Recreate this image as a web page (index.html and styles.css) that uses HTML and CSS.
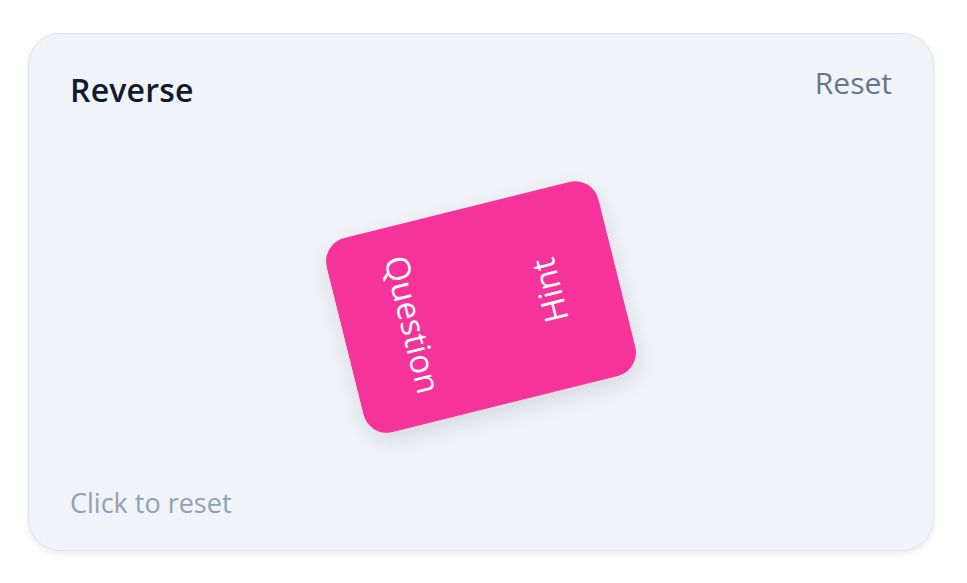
FILE: index.html
```html
<!DOCTYPE html>
<html lang="en">
<head>
<meta charset="utf-8">
<title>Reverse</title>
<link rel="stylesheet" href="styles.css">
</head>
<body>
<main class="panel">
  <header class="panel-head">
    <h1 class="panel-title">Reverse</h1>
    <button class="reset-btn" type="button">Reset</button>
  </header>
  <section class="stage">
    <div class="flashcard">
      <span class="face-label face-question">Question</span>
      <span class="face-label face-hint">Hint</span>
    </div>
  </section>
  <footer class="panel-foot">Click to reset</footer>
</main>
</body>
</html>
```

FILE: styles.css
```css
html, body {
  margin: 0;
  background: #ffffff;
}

body {
  padding: 33px 33px 32px 28px;
  box-sizing: border-box;
  height: 583px;
  font-family: "Open Sans", "Noto Sans", sans-serif;
}

.panel {
  box-sizing: border-box;
  height: 100%;
  display: flex;
  flex-direction: column;
  background: #f0f4f9;
  border: 1px solid #dfe5ee;
  border-radius: 32px;
  box-shadow: 0 3px 6px rgba(15, 23, 42, 0.08);
  padding: 36px 41px 30px 41px;
}

.panel-head {
  display: flex;
  justify-content: space-between;
  align-items: flex-start;
}

.panel-title {
  margin: 0;
  font-size: 32px;
  font-weight: 600;
  color: #111a2e;
  line-height: 40px;
  letter-spacing: 0.2px;
}

.reset-btn {
  margin: -5px 0 0 0;
  padding: 0;
  border: 0;
  background: none;
  font-family: inherit;
  font-size: 30px;
  color: #67758a;
  line-height: 36px;
  cursor: pointer;
}

.stage {
  flex: 1;
  display: flex;
  align-items: center;
  justify-content: center;
  padding-top: 18px;
}

.flashcard {
  width: 280px;
  height: 200px;
  border-radius: 24px;
  background: #f6339b;
  transform: rotate(-14deg);
  box-shadow: 0 8px 20px rgba(15, 23, 42, 0.12);
  display: flex;
  justify-content: space-around;
  align-items: center;
}

.face-label {
  width: 0;
  display: flex;
  justify-content: center;
  white-space: nowrap;
  color: #ffffff;
  font-size: 33px;
  font-weight: 500;
}

.face-question {
  transform: rotate(90deg);
}

.face-hint {
  transform: rotate(-90deg);
}

.panel-foot {
  font-size: 27px;
  color: #91a1b6;
  line-height: 36px;
  margin-bottom: -1px;
}
```
